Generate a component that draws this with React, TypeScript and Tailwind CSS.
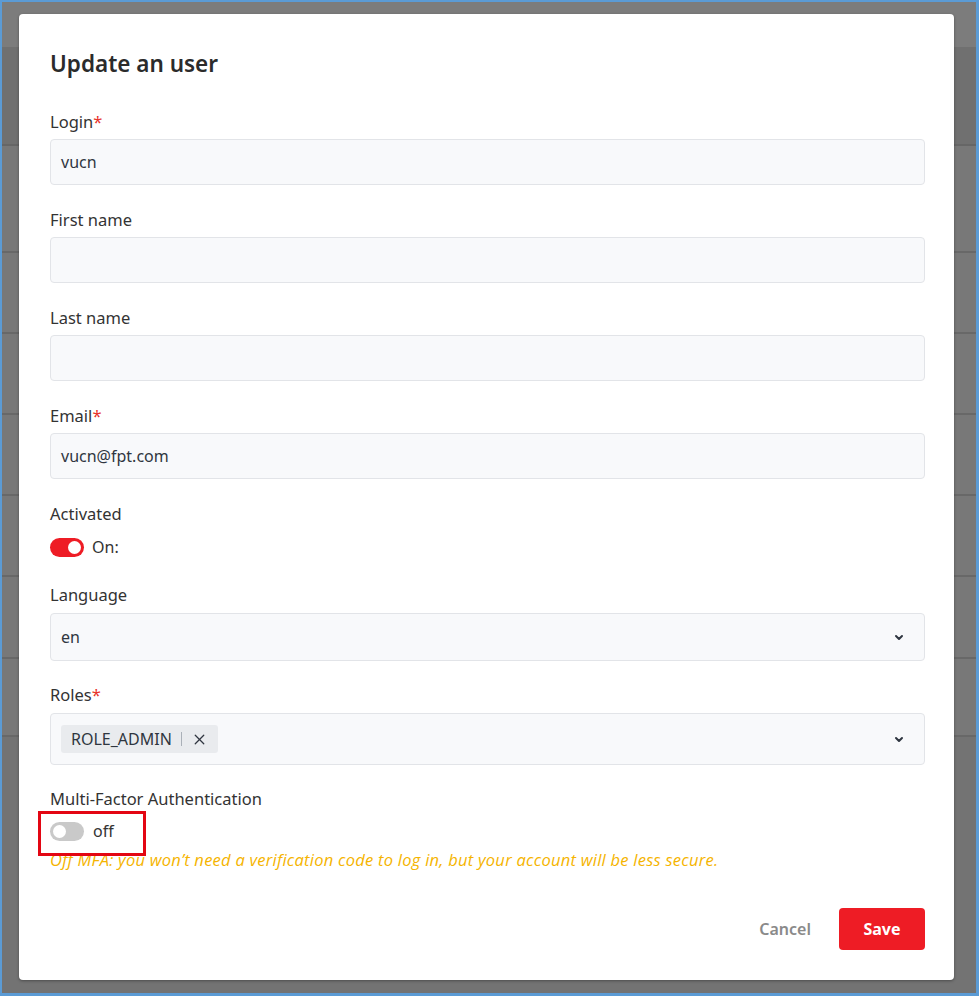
import React from 'react';
import { X } from 'lucide-react';

const font = { fontFamily: '"Noto Sans", "Open Sans", sans-serif' };

function Label({ text, required }: { text: string; required?: boolean }) {
  return (
    <div className="h-[24px] text-[16.5px] leading-[24px] text-[#333]">
      {text}
      {required && <span className="text-[#e8332a]">*</span>}
    </div>
  );
}

function Input({ value }: { value?: string }) {
  return (
    <div className="mt-[5px] flex h-[46px] items-center rounded-[4px] border border-[#e2e4e8] bg-[#f8f9fb] px-[10px] text-[16px] text-[#2f3640]">
      {value}
    </div>
  );
}

function Chevron() {
  return (
    <svg width="10" height="7" viewBox="0 0 10 7" className="text-[#2f3640]">
      <path d="M2 2l3 3 3-3" fill="none" stroke="currentColor" strokeWidth="2" strokeLinecap="round" strokeLinejoin="round" />
    </svg>
  );
}

function Toggle({ on }: { on: boolean }) {
  return (
    <div
      className={
        on
          ? 'flex h-[19px] w-[34px] items-center justify-end rounded-full bg-[#ee1c25] px-[3px]'
          : 'flex h-[19px] w-[34px] items-center justify-start rounded-full bg-[#c9c9c9] px-[3px]'
      }
    >
      <div className="h-[13px] w-[13px] rounded-full bg-white" />
    </div>
  );
}

export default function App() {
  const rows = [107, 81, 81, 81, 81, 82, 78];
  return (
    <div style={font} className="relative h-[996px] w-[979px] overflow-hidden border-t-2 border-l-2 border-r-[3px] border-b-[3px] border-[#5b9bd5] bg-[#737373]">
      {/* table behind the overlay */}
      <div className="h-[45px] bg-[#7c7c7c]" />
      <div className="h-[99px] border-b-2 border-[#666] bg-[#707070]" />
      {rows.map((h, i) => (
        <div key={i} style={{ height: h }} className="border-b-2 border-[#686868] bg-[#787878]" />
      ))}

      {/* modal */}
      <div className="absolute left-[17px] top-[12px] h-[966px] w-[935px] rounded-[4px] bg-white pl-[31px] pr-[29px] pt-[35px] shadow-[0_1px_3px_rgba(0,0,0,0.35)]">
        <h1 className="h-[30px] text-[22.5px] font-semibold leading-[30px] text-[#2b2b2b]">Update an user</h1>

        <div className="mt-[31px]">
          <Label text="Login" required />
          <Input value="vucn" />
        </div>
        <div className="mt-[23px]">
          <Label text="First name" />
          <Input />
        </div>
        <div className="mt-[23px]">
          <Label text="Last name" />
          <Input />
        </div>
        <div className="mt-[23px]">
          <Label text="Email" required />
          <Input value="vucn@fpt.com" />
        </div>

        <div className="mt-[23px]">
          <Label text="Activated" />
          <div className="mt-[9px] flex h-[24px] items-center gap-[8px] text-[16px] text-[#333]">
            <Toggle on />
            <span>On:</span>
          </div>
        </div>

        <div className="mt-[24px]">
          <Label text="Language" />
          <div className="mt-[6px] flex h-[48px] items-center justify-between rounded-[4px] border border-[#e2e4e8] bg-[#f8f9fb] pl-[10px] pr-[20px] text-[16px] text-[#2f3640]">
            <span>en</span>
            <Chevron />
          </div>
        </div>

        <div className="mt-[22px]">
          <Label text="Roles" required />
          <div className="mt-[6px] flex h-[52px] items-center justify-between rounded-[4px] border border-[#e2e4e8] bg-[#f8f9fb] pl-[10px] pr-[20px]">
            <div className="flex h-[28px] items-center rounded-[3px] bg-[#e9ebee] pl-[10px] pr-[10px] text-[16px] text-[#2f3640]">
              <span>ROLE_ADMIN</span>
              <span className="mx-[9px] h-[14px] w-px bg-[#aab0b8]" />
              <X size={17} strokeWidth={1.8} className="text-[#2f3640]" />
            </div>
            <Chevron />
          </div>
        </div>

        <div className="mt-[22px]">
          <Label text="Multi-Factor Authentication" />
          <div className="relative mt-[8px] flex h-[24px] items-center gap-[9px] text-[16px] text-[#333]">
            <Toggle on={false} />
            <span>off</span>
            <div className="absolute left-[-12px] top-[-8px] h-[45px] w-[108px] border-[3px] border-[#e30613]" />
          </div>
          <div
            style={{ fontFamily: '"Open Sans", "Noto Sans", sans-serif' }}
            className="mt-[6px] h-[22px] text-[16.5px] italic leading-[22px] tracking-[0.25px] text-[#f5b400]"
          >
            Off MFA: you won’t need a verification code to log in, but your account will be less secure.
          </div>
        </div>

        <div className="mt-[37px] flex items-center justify-end gap-[28px]">
          <button className="text-[16px] font-semibold text-[#8a8a8a]">Cancel</button>
          <button className="h-[42px] w-[86px] rounded-[4px] bg-[#ee1c25] text-[16px] font-bold text-white">Save</button>
        </div>
      </div>
    </div>
  );
}
